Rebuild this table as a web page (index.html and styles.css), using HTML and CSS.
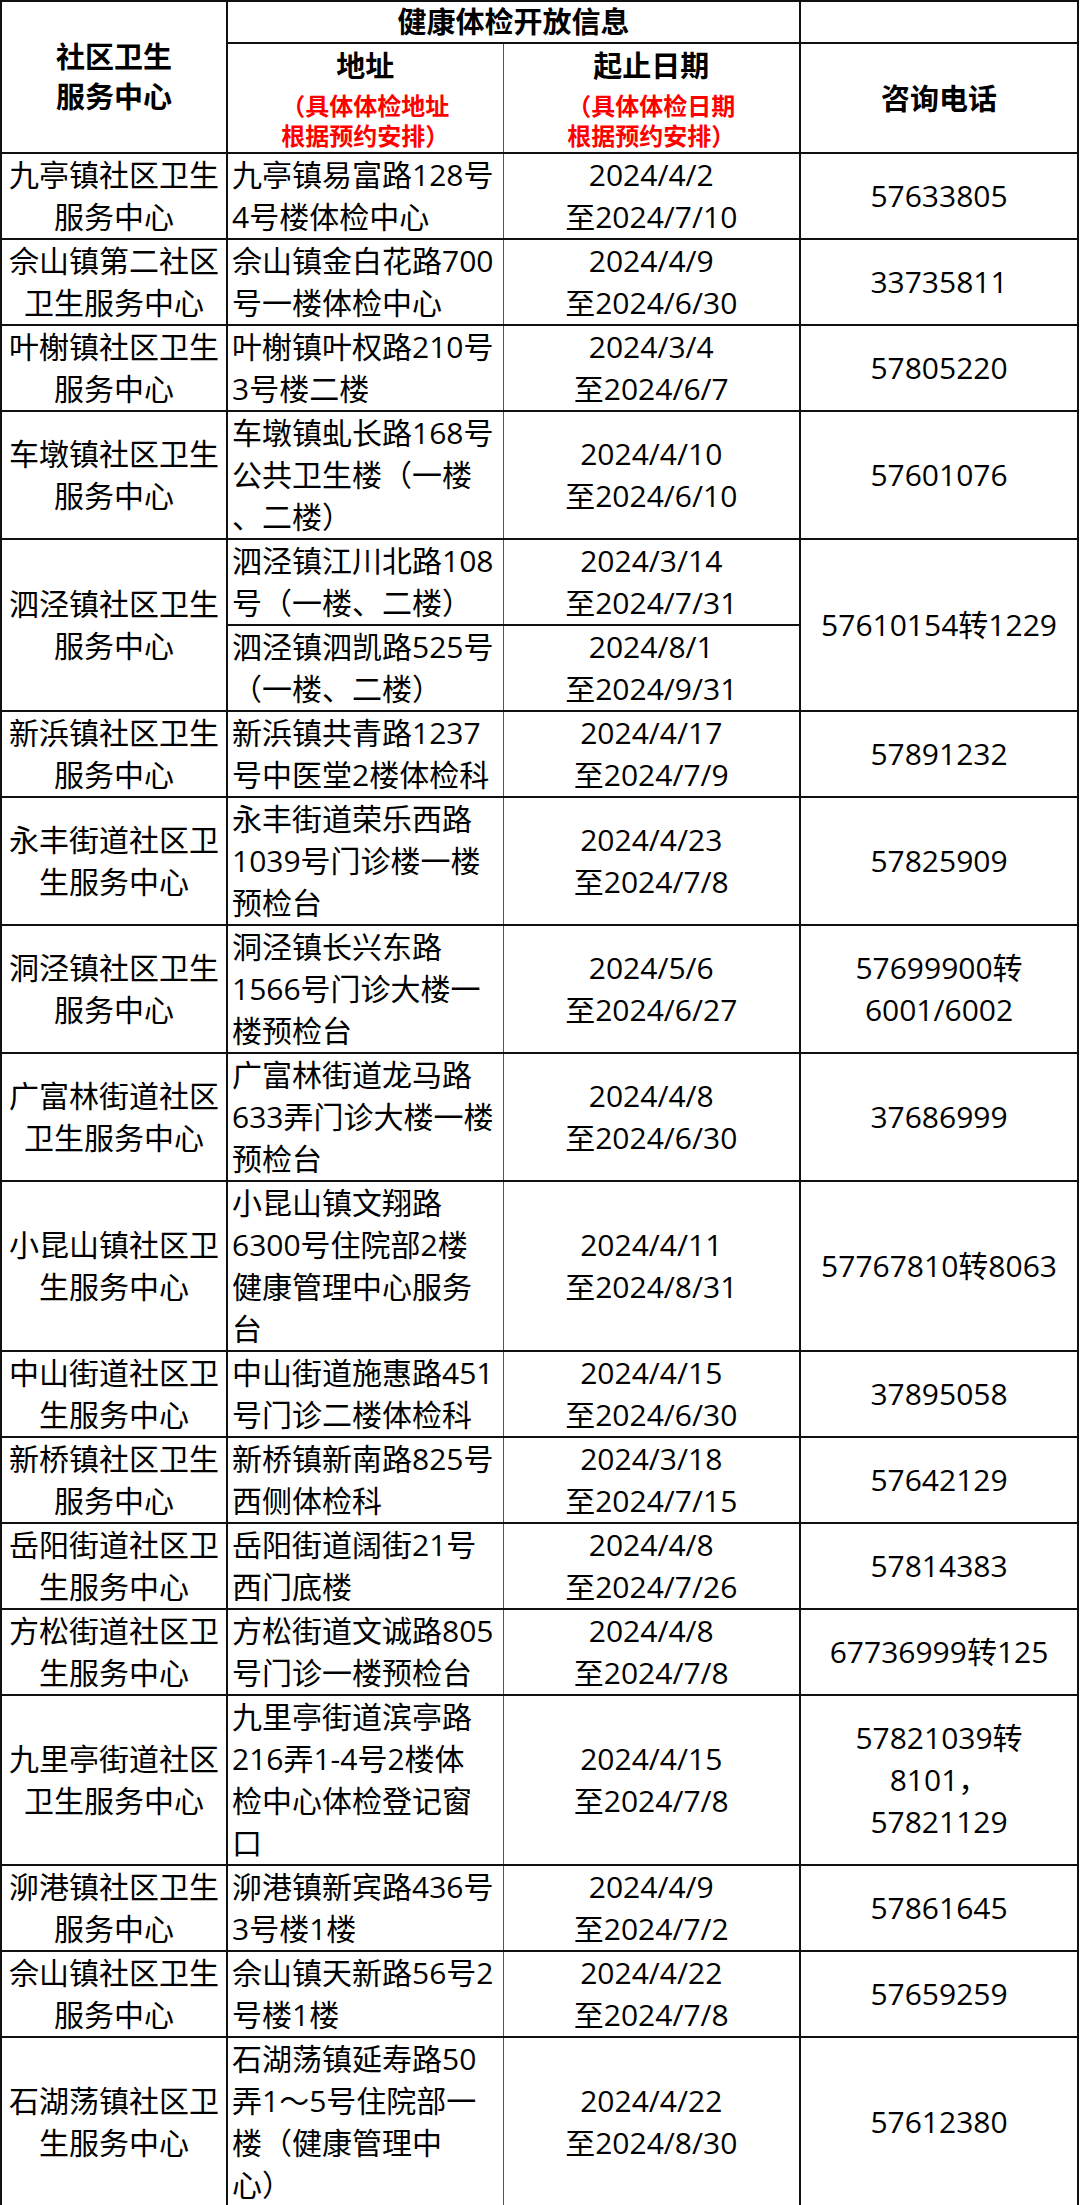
FILE: index.html
```html
<!DOCTYPE html>
<html lang="zh-CN">
<head>
<meta charset="utf-8">
<title>健康体检开放信息</title>
<link rel="stylesheet" href="styles.css">
</head>
<body>
<table class="grid">
  <colgroup>
    <col class="c-name">
    <col class="c-addr">
    <col class="c-date">
    <col class="c-tel">
  </colgroup>
  <thead>
    <tr class="h1">
      <th class="name-h" rowspan="2">社区卫生<br>服务中心</th>
      <th class="open-h" colspan="2">健康体检开放信息</th>
      <th class="blank-h"></th>
    </tr>
    <tr class="h2">
      <th class="addr-h"><div class="sub-t">地址</div><div class="note">（具体体检地址<br>根据预约安排）</div></th>
      <th class="date-h"><div class="sub-t">起止日期</div><div class="note">（具体体检日期<br>根据预约安排）</div></th>
      <th class="tel-h">咨询电话</th>
    </tr>
  </thead>
  <tbody>
    <tr>
      <td class="name">九亭镇社区卫生<br>服务中心</td>
      <td class="addr">九亭镇易富路128号<br>4号楼体检中心</td>
      <td class="date">2024/4/2<br>至2024/7/10</td>
      <td class="tel">57633805</td>
    </tr>
    <tr>
      <td class="name">佘山镇第二社区<br>卫生服务中心</td>
      <td class="addr">佘山镇金白花路700<br>号一楼体检中心</td>
      <td class="date">2024/4/9<br>至2024/6/30</td>
      <td class="tel">33735811</td>
    </tr>
    <tr class="soft">
      <td class="name">叶榭镇社区卫生<br>服务中心</td>
      <td class="addr">叶榭镇叶权路210号<br>3号楼二楼</td>
      <td class="date">2024/3/4<br>至2024/6/7</td>
      <td class="tel">57805220</td>
    </tr>
    <tr>
      <td class="name">车墩镇社区卫生<br>服务中心</td>
      <td class="addr">车墩镇虬长路168号<br>公共卫生楼（一楼<br>、二楼）</td>
      <td class="date">2024/4/10<br>至2024/6/10</td>
      <td class="tel">57601076</td>
    </tr>
    <tr class="split">
      <td class="name" rowspan="2">泗泾镇社区卫生<br>服务中心</td>
      <td class="addr">泗泾镇江川北路108<br>号（一楼、二楼）</td>
      <td class="date">2024/3/14<br>至2024/7/31</td>
      <td class="tel" rowspan="2">57610154转1229</td>
    </tr>
    <tr>
      <td class="addr">泗泾镇泗凯路525号<br>（一楼、二楼）</td>
      <td class="date">2024/8/1<br>至2024/9/31</td>
    </tr>
    <tr>
      <td class="name">新浜镇社区卫生<br>服务中心</td>
      <td class="addr">新浜镇共青路1237<br>号中医堂2楼体检科</td>
      <td class="date">2024/4/17<br>至2024/7/9</td>
      <td class="tel">57891232</td>
    </tr>
    <tr>
      <td class="name">永丰街道社区卫<br>生服务中心</td>
      <td class="addr">永丰街道荣乐西路<br>1039号门诊楼一楼<br>预检台</td>
      <td class="date">2024/4/23<br>至2024/7/8</td>
      <td class="tel">57825909</td>
    </tr>
    <tr class="soft">
      <td class="name">洞泾镇社区卫生<br>服务中心</td>
      <td class="addr">洞泾镇长兴东路<br>1566号门诊大楼一<br>楼预检台</td>
      <td class="date">2024/5/6<br>至2024/6/27</td>
      <td class="tel">57699900转<br>6001/6002</td>
    </tr>
    <tr>
      <td class="name">广富林街道社区<br>卫生服务中心</td>
      <td class="addr">广富林街道龙马路<br>633弄门诊大楼一楼<br>预检台</td>
      <td class="date">2024/4/8<br>至2024/6/30</td>
      <td class="tel">37686999</td>
    </tr>
    <tr class="soft">
      <td class="name">小昆山镇社区卫<br>生服务中心</td>
      <td class="addr">小昆山镇文翔路<br>6300号住院部2楼<br>健康管理中心服务<br>台</td>
      <td class="date">2024/4/11<br>至2024/8/31</td>
      <td class="tel">57767810转8063</td>
    </tr>
    <tr>
      <td class="name">中山街道社区卫<br>生服务中心</td>
      <td class="addr">中山街道施惠路451<br>号门诊二楼体检科</td>
      <td class="date">2024/4/15<br>至2024/6/30</td>
      <td class="tel">37895058</td>
    </tr>
    <tr>
      <td class="name">新桥镇社区卫生<br>服务中心</td>
      <td class="addr">新桥镇新南路825号<br>西侧体检科</td>
      <td class="date">2024/3/18<br>至2024/7/15</td>
      <td class="tel">57642129</td>
    </tr>
    <tr>
      <td class="name">岳阳街道社区卫<br>生服务中心</td>
      <td class="addr">岳阳街道阔街21号<br>西门底楼</td>
      <td class="date">2024/4/8<br>至2024/7/26</td>
      <td class="tel">57814383</td>
    </tr>
    <tr>
      <td class="name">方松街道社区卫<br>生服务中心</td>
      <td class="addr">方松街道文诚路805<br>号门诊一楼预检台</td>
      <td class="date">2024/4/8<br>至2024/7/8</td>
      <td class="tel">67736999转125</td>
    </tr>
    <tr>
      <td class="name">九里亭街道社区<br>卫生服务中心</td>
      <td class="addr">九里亭街道滨亭路<br>216弄1-4号2楼体<br>检中心体检登记窗<br>口</td>
      <td class="date">2024/4/15<br>至2024/7/8</td>
      <td class="tel">57821039转<br>8101，<br>57821129</td>
    </tr>
    <tr>
      <td class="name">泖港镇社区卫生<br>服务中心</td>
      <td class="addr">泖港镇新宾路436号<br>3号楼1楼</td>
      <td class="date">2024/4/9<br>至2024/7/2</td>
      <td class="tel">57861645</td>
    </tr>
    <tr>
      <td class="name">佘山镇社区卫生<br>服务中心</td>
      <td class="addr">佘山镇天新路56号2<br>号楼1楼</td>
      <td class="date">2024/4/22<br>至2024/7/8</td>
      <td class="tel">57659259</td>
    </tr>
    <tr>
      <td class="name">石湖荡镇社区卫<br>生服务中心</td>
      <td class="addr">石湖荡镇延寿路50<br>弄1～5号住院部一<br>楼（健康管理中<br>心）</td>
      <td class="date">2024/4/22<br>至2024/8/30</td>
      <td class="tel">57612380</td>
    </tr>
  </tbody>
</table>
</body>
</html>
```

FILE: styles.css
```css
html, body {
  margin: 0;
  padding: 0;
  background: #ffffff;
}

.grid {
  border-collapse: collapse;
  table-layout: fixed;
  width: 1077px;
  font-family: "Open Sans", "Noto Sans CJK SC", sans-serif;
  font-size: 30px;
  line-height: 42px;
  color: #000000;
}

.c-name { width: 226px; }
.c-addr { width: 276px; }
.c-date { width: 297px; }
.c-tel  { width: 278px; }

.grid th,
.grid td {
  border: 2px solid #111111;
  padding: 0 3px;
  vertical-align: middle;
  text-align: center;
  white-space: nowrap;
}

.grid th {
  font-size: 29px;
  font-weight: 700;
  line-height: 43px;
}

.h1 th {
  line-height: 40px;
}

.h2 th {
  padding-top: 1px;
  padding-bottom: 1px;
}

.sub-t {
  line-height: 42px;
}

.note {
  margin-top: 4px;
  color: #ff0000;
  font-size: 24px;
  line-height: 30px;
  font-weight: 700;
}

.grid .addr,
.grid .addr-h {
  border-right: 1px solid #555555;
}

.grid .date,
.grid .date-h {
  border-left: 1px solid #555555;
}

.grid .addr {
  text-align: left;
  padding-left: 4px;
}

.soft td {
  border-bottom: 1px solid #6a6a6a;
}

.split .addr,
.split .date {
  border-bottom: 1px solid #444444;
}
```
